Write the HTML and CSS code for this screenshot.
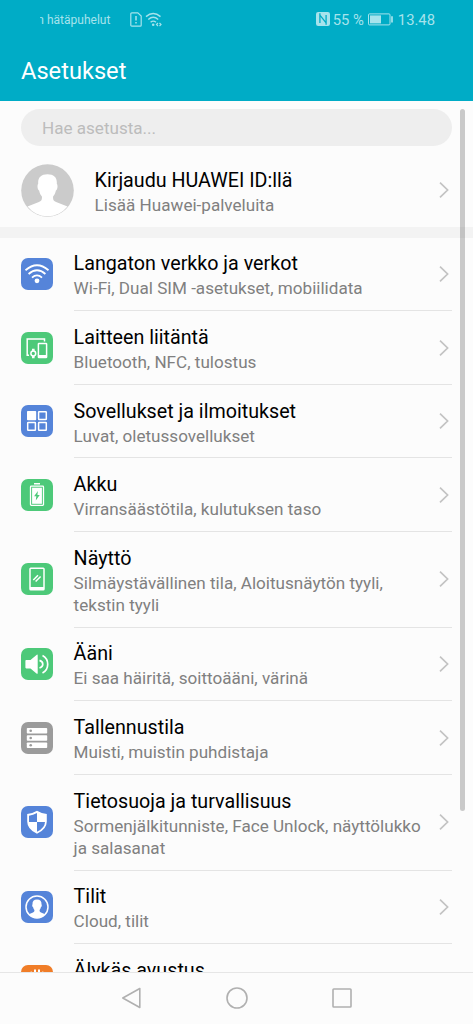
FILE: index.html
```html
<!DOCTYPE html>
<html lang="fi">
<head>
<meta charset="utf-8">
<title>Asetukset</title>
<link rel="stylesheet" href="styles.css">
</head>
<body>
<svg width="0" height="0" class="defs">
  <symbol id="chev" viewBox="0 0 12 18"><path d="M2 1.700 9.600 9 2 16.300" fill="none" stroke="#c3c3c3" stroke-width="1.700"/></symbol>
</svg>
<div class="phone">
  <header class="top">
    <div class="status">
      <span class="carrier"><span class="clip">n</span> hätäpuhelut</span>
      <svg class="sim" width="12" height="15" viewBox="0 0 12 15" fill="none" stroke="currentColor" stroke-width="1.200"><path d="M1.800.8h6L11.200 4v9.200a1 1 0 0 1-1 1H1.800a1 1 0 0 1-1-1V1.800a1 1 0 0 1 1-1z"/><path d="M6 4v4.500M6 10v1.600" stroke-width="1.500"/></svg>
      <svg class="wifi" width="18" height="15" viewBox="0 0 18 15" fill="none" stroke="currentColor" stroke-width="1.400"><path d="M1 4.600Q8.200-1.700 15.500 4.600M3.300 7.500Q8.200 3.200 13.200 7.500M5.600 10.200Q8.200 8 11 10.200"/><circle cx="8.200" cy="12.700" r="1.300" fill="currentColor" stroke="none"/><path d="m13 11-1.500 1.500 1.500 1.500M14.500 11l1.500 1.500-1.500 1.500" stroke-width="1.200"/></svg>
      <span class="right">
        <svg width="14" height="14" viewBox="0 0 14 14"><rect width="14" height="14" rx="2.200" fill="currentColor"/><path d="M3.900 1.200V11M3.900 3.100l6.200 7.800M10.100 3v9.800" fill="none" stroke="#00acc6" stroke-width="1.300"/></svg>
        <span class="pct">55 %</span>
        <svg class="batt" width="25" height="13" viewBox="0 0 25 13"><rect x=".5" y=".9" width="21.500" height="11" rx="1" fill="none" stroke="currentColor"/><rect x="2" y="2.400" width="11" height="8" fill="currentColor"/><path d="M24 3.300v6.200" stroke="currentColor" stroke-width="1.700"/></svg>
        <span class="clock">13.48</span>
      </span>
    </div>
    <h1>Asetukset</h1>
  </header>
  <main class="content">
    <div class="search">Hae asetusta...</div>
    <section class="account">
      <svg class="avatar" width="53" height="53" viewBox="0 0 53 53"><circle cx="26.500" cy="26.500" r="26.300" fill="#cbcbcb"/><path d="M26.500 10.200c-6.500 0-9.800 3.300-9.300 9.600-1.300 1.500-.7 6 .9 6.800.5 2.700 1.500 4.500 2.800 6 .3 3.200-.5 4.300-3 5.500L6.500 42.500a25.500 25.500 0 0 0 40 0l-11.400-4.400c-2.500-1.200-3.300-2.300-3-5.500 1.300-1.500 2.300-3.300 2.800-6 1.600-.8 2.200-5.300.9-6.800.5-6.300-2.800-9.600-9.300-9.600z" fill="#fff"/></svg>
      <div class="text"><div class="title">Kirjaudu HUAWEI ID:llä</div><div class="sub">Lisää Huawei-palveluita</div></div>
      <svg class="chev"><use href="#chev"/></svg>
    </section>
    <div class="band"></div>
    <ul class="list">
      <li class="row">
        <svg class="ico blue" viewBox="0 0 32 32"><g fill="none" stroke="#fff" stroke-width="1.800"><path d="M4.500 12.300Q16 2.300 27.500 12.300M7.600 16Q16 8.500 24.400 16M11 19.600Q16 15.200 21 19.600"/></g><circle cx="16" cy="22.800" r="2.400" fill="#fff"/></svg>
        <div class="text"><div class="title">Langaton verkko ja verkot</div><div class="sub">Wi-Fi, Dual SIM -asetukset, mobiilidata</div></div>
        <svg class="chev"><use href="#chev"/></svg>
      </li>
      <li class="row">
        <svg class="ico green" viewBox="0 0 32 32"><g fill="none" stroke="#fff" stroke-width="1.500"><path d="M8 23.200H6.200V7h17.300v2.500"/><rect x="17.400" y="11.500" width="8.200" height="14" rx=".6"/><circle cx="12.300" cy="21.500" r="2.400"/></g><path d="M17 23h9v3h-9zM11 16.800h2.600v2.500H11zM11 23.700h2.600v2.500H11z" fill="#fff"/></svg>
        <div class="text"><div class="title">Laitteen liitäntä</div><div class="sub">Bluetooth, NFC, tulostus</div></div>
        <svg class="chev"><use href="#chev"/></svg>
      </li>
      <li class="row">
        <svg class="ico blue" viewBox="0 0 32 32"><rect x="6" y="6" width="9.200" height="9.200" rx=".8" fill="#fff"/><g fill="none" stroke="#fff" stroke-width="1.500"><rect x="17.600" y="6.700" width="7.700" height="7.700" rx=".5"/><rect x="6.700" y="17.600" width="7.700" height="7.700" rx=".5"/><rect x="17.600" y="17.600" width="7.700" height="7.700" rx=".5"/></g></svg>
        <div class="text"><div class="title">Sovellukset ja ilmoitukset</div><div class="sub">Luvat, oletussovellukset</div></div>
        <svg class="chev"><use href="#chev"/></svg>
      </li>
      <li class="row">
        <svg class="ico green" viewBox="0 0 32 32"><path d="M13 4h6v1.400h-6z" fill="#fff"/><rect x="9.500" y="7.100" width="13" height="19.300" rx=".8" fill="none" stroke="#fff" stroke-width="1.300"/><rect x="11.100" y="8.700" width="9.800" height="16.100" fill="#fff"/><path d="m16.900 12-3.800 5.300h2.200l-.5 4.200 3.900-5.500h-2.300z" fill="#4dc979"/></svg>
        <div class="text"><div class="title">Akku</div><div class="sub">Virransäästötila, kulutuksen taso</div></div>
        <svg class="chev"><use href="#chev"/></svg>
      </li>
      <li class="row tall">
        <svg class="ico green" viewBox="0 0 32 32"><rect x="9" y="5.300" width="14" height="21.500" rx=".8" fill="none" stroke="#fff" stroke-width="1.500"/><path d="M9 24h14v3H9z" fill="#fff"/><path d="m12.300 17 4.700-4.700M14.600 18.500l5-5" stroke="#fff" stroke-width="1.500"/></svg>
        <div class="text"><div class="title">Näyttö</div><div class="sub">Silmäystävällinen tila, Aloitusnäytön tyyli,<br>tekstin tyyli</div></div>
        <svg class="chev"><use href="#chev"/></svg>
      </li>
      <li class="row">
        <svg class="ico green" viewBox="0 0 32 32"><path d="M5.200 12h4.300l6.300-5.300q.9-.5.900.5v18q0 1-.9.500L9.500 20.400H5.200q-.8 0-.8-.8v-6.800q0-.8.800-.8z" fill="#fff"/><path d="M18.500 12.400q3.300 1.100 3.300 3.800t-3.300 3.800M21.500 7.400q5.200 2.800 5.200 8.800t-5.200 8.800" fill="none" stroke="#fff" stroke-width="1.700"/></svg>
        <div class="text"><div class="title">Ääni</div><div class="sub">Ei saa häiritä, soittoääni, värinä</div></div>
        <svg class="chev"><use href="#chev"/></svg>
      </li>
      <li class="row">
        <svg class="ico gray" viewBox="0 0 32 32"><g fill="#fff"><rect x="5.800" y="6" width="20.400" height="5.600" rx=".8"/><rect x="5.800" y="13.200" width="20.400" height="5.600" rx=".8"/><rect x="5.800" y="20.400" width="20.400" height="5.600" rx=".8"/></g><g fill="#9b9b9b"><circle cx="9.700" cy="8.800" r="1.300"/><circle cx="9.700" cy="16" r="1.300"/><circle cx="9.700" cy="23.200" r="1.300"/></g></svg>
        <div class="text"><div class="title">Tallennustila</div><div class="sub">Muisti, muistin puhdistaja</div></div>
        <svg class="chev"><use href="#chev"/></svg>
      </li>
      <li class="row tall">
        <svg class="ico blue" viewBox="0 0 32 32"><path d="M16 4.700Q20.500 7.500 25.800 8v7.500q0 7.800-9.800 12.300Q6.200 23.300 6.200 15.500V8Q11.500 7.500 16 4.700z" fill="#fff"/><path d="M16 7q-4 2.200-8 2.700V16h8zM16 16h8q-.2 6-8 9.800z" fill="#5584d9"/></svg>
        <div class="text"><div class="title">Tietosuoja ja turvallisuus</div><div class="sub">Sormenjälkitunniste, Face Unlock, näyttölukko<br>ja salasanat</div></div>
        <svg class="chev"><use href="#chev"/></svg>
      </li>
      <li class="row">
        <svg class="ico blue" viewBox="0 0 32 32"><circle cx="16" cy="16" r="11" fill="none" stroke="#fff" stroke-width="1.500"/><path d="M16 8.500c-3.200 0-4.700 1.700-4.500 4.700-.6.700-.2 2.700.6 3.100.2 1.200.7 2 1.300 2.700.1 1.500-.2 1.900-1.400 2.400l-4.200 1.900Q11 27 16 27t8.200-3.700L20 21.400c-1.200-.5-1.500-.9-1.400-2.400.6-.7 1.100-1.500 1.300-2.700.8-.4 1.200-2.400.6-3.100.2-3-1.300-4.700-4.500-4.700z" fill="#fff"/></svg>
        <div class="text"><div class="title">Tilit</div><div class="sub">Cloud, tilit</div></div>
        <svg class="chev"><use href="#chev"/></svg>
      </li>
      <li class="row">
        <svg class="ico orange" viewBox="0 0 32 32"><path d="M10.200 7.500v9M14 5.200v9M18 5.200v9M21.800 7.500v9" stroke="#fff" stroke-width="2" stroke-linecap="round"/></svg>
        <div class="text"><div class="title">Älykäs avustus</div></div>
      </li>
    </ul>
    <div class="scrollbar"></div>
  </main>
  <nav class="nav">
    <svg width="22" height="24" viewBox="0 0 22 24"><path d="M18.800 2.500v19L1.800 12z"/></svg>
    <svg width="24" height="24" viewBox="0 0 24 24"><circle cx="12" cy="12" r="10"/></svg>
    <svg width="22" height="24" viewBox="0 0 22 24"><rect x="2" y="3" width="18" height="18" rx=".8"/></svg>
  </nav>
</div>
</body>
</html>
```
FILE: styles.css
```css
* { box-sizing: border-box; }
body { margin: 0; font-family: Roboto, "Noto Sans", sans-serif; background: #fcfcfc; }
.defs { position: absolute; }
.phone { width: 473px; height: 1024px; display: flex; flex-direction: column; overflow: hidden; background: #fcfcfc; }
.top { flex: none; height: 101px; background: #00acc6; color: #fff; }
.status { height: 38px; padding: 0 38px 0 37px; display: flex; align-items: center; color: #a6e3ec; }
.carrier { font-size: 12px; line-height: 15px; padding-top: 2px; white-space: pre; display: flex; width: 92px; }
.clip { width: 7px; display: flex; justify-content: flex-end; overflow: hidden; clip-path: inset(0 0 0 3px); }
.sim { margin-left: 1px; }
.wifi { margin-left: 3px; }
.right { margin-left: auto; display: flex; align-items: center; font-size: 14.8px; line-height: 18px; }
.pct, .clock { padding-top: 1px; }
.pct { margin-left: 3px; }
.batt { margin: 0 5px 0 4px; }
h1 { margin: 0; padding-left: 21px; font-size: 23.650px; line-height: 66px; font-weight: 400; }
.content { position: relative; flex: 1; min-height: 0; overflow: hidden; padding-top: 8px; }
.search { height: 37px; margin: 0 21px; padding-left: 21px; border-radius: 19px; background: #eee; color: #bcbcbc; font-size: 17.080px; line-height: 38px; }
.account { height: 81px; padding: 8px 21px 0; display: flex; align-items: center; }
.account .text { margin-left: 20.600px; padding-top: 2px; }
.band { height: 10.700px; background: #f3f3f3; }
.list { margin: 0; padding: 0 21px; list-style: none; }
.row { height: 73.600px; display: flex; align-items: center; position: relative; }
.tall { height: 95.700px; }
.row .text { margin-left: 20.600px; align-self: stretch; flex: 1; padding-top: 13.700px; border-bottom: 1px solid #e4e4e4; }
.row .chev { position: absolute; right: 2px; }
.row .ico, .row .chev { margin-bottom: 1px; }
.title { font-size: 19.700px; line-height: 26px; color: #000; white-space: nowrap; }
.sub { font-size: 17.100px; line-height: 22px; color: #808080; white-space: nowrap; }
.ico { width: 32px; height: 32px; border-radius: 7px; flex: none; }
.blue { background: #5584d9; }
.green { background: #4dc979; }
.gray { background: #9b9b9b; }
.orange { background: #f07d28; }
.chev { width: 12px; height: 18px; flex: none; }
.account .chev { margin: 0 2px 1px auto; }
.scrollbar { position: absolute; top: 8px; right: 8px; width: 5px; height: 702px; border-radius: 3px; background: rgba(0, 0, 0, .2); }
.nav { flex: none; height: 52px; padding-bottom: 2px; border-top: 1px solid #e6e6e6; background: #fcfcfc; display: flex; justify-content: center; align-items: center; gap: 82px; }
.nav svg { fill: none; stroke: #b0b0b0; stroke-width: 1.600; stroke-linejoin: round; }
```
